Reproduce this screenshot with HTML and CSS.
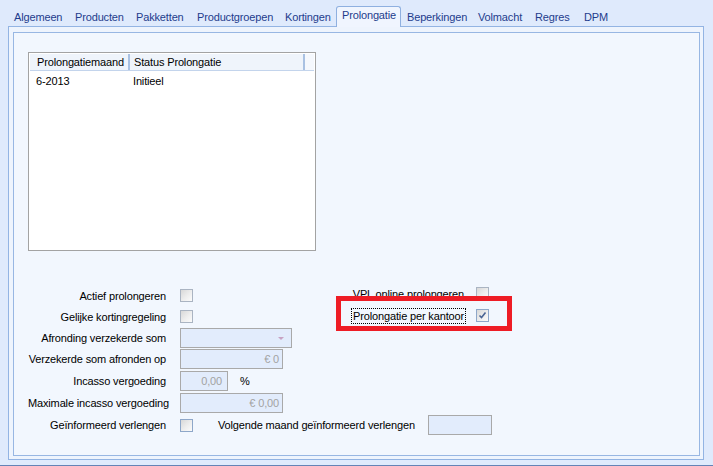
FILE: index.html
```html
<!DOCTYPE html>
<html>
<head>
<meta charset="utf-8">
<link rel="stylesheet" href="styles.css">
</head>
<body>
<div class="app">
  <div class="tabs">
    <div class="tab">Algemeen</div>
    <div class="tab">Producten</div>
    <div class="tab">Pakketten</div>
    <div class="tab">Productgroepen</div>
    <div class="tab">Kortingen</div>
    <div class="tab active">Prolongatie</div>
    <div class="tab">Beperkingen</div>
    <div class="tab">Volmacht</div>
    <div class="tab">Regres</div>
    <div class="tab">DPM</div>
  </div>
  <div class="sheet">
    <div class="panel">
      <div class="listbox">
        <div class="lv-head">
          <div class="lv-col c1">Prolongatiemaand</div>
          <div class="lv-col c2">Status Prolongatie</div>
          <div class="lv-fill"></div>
        </div>
        <div class="lv-row">
          <div class="lv-cell c1">6-2013</div>
          <div class="lv-cell c2">Initieel</div>
        </div>
      </div>

      <div class="form">
        <div class="lbl">Actief prolongeren</div>
        <div class="ctl"><span class="cb"></span></div>
        <div class="side lift2"><span class="side-lbl">VPL online prolongeren</span><span class="cb"></span></div>

        <div class="lbl">Gelijke kortingregeling</div>
        <div class="ctl"><span class="cb"></span></div>
        <div class="side lift1"><span class="side-lbl focus">Prolongatie per kantoor</span><span class="cb checked"><svg width="11" height="11" viewBox="0 0 11 11"><path d="M2.5 5.5 L4.5 7.5 L8.5 2.5" fill="none" stroke="#4a6494" stroke-width="1.6"/></svg></span></div>

        <div class="lbl">Afronding verzekerde som</div>
        <div class="ctl wide"><span class="combo"><span class="arrow"></span></span></div>

        <div class="lbl">Verzekerde som afronden op</div>
        <div class="ctl wide"><span class="edit w103">€ 0</span></div>

        <div class="lbl">Incasso vergoeding</div>
        <div class="ctl wide"><span class="edit w48">0,00</span><span class="pct">%</span></div>

        <div class="lbl">Maximale incasso vergoeding</div>
        <div class="ctl wide"><span class="edit w103">€ 0,00</span></div>

        <div class="lbl">Geïnformeerd verlengen</div>
        <div class="ctl wide"><span class="cb blue"></span><span class="next-lbl">Volgende maand geïnformeerd verlengen</span><span class="edit w64"></span></div>
      </div>
    </div>
  </div>
  <div class="annot"></div>
</div>
</body>
</html>
```

FILE: styles.css
```css
* { box-sizing: border-box; }
html, body { margin: 0; padding: 0; }
body {
  background: #dfeafc;
  font-family: "Liberation Sans", Arial, sans-serif;
  font-size: 11px;
  letter-spacing: -0.15px;
  color: #000;
}
.app {
  position: relative;
  width: 713px;
  height: 466px;
  border-bottom: 1px solid #6483b6;
  overflow: hidden;
}
.tabs {
  display: grid;
  grid-template-columns: 61px 61px 61px 88px 57px 65px 71px 57px 49px 40px;
  height: 26px;
  padding-left: 8px;
  align-items: end;
}
.tab {
  height: 16px;
  padding: 1px 0 0 6px;
  line-height: 13px;
  color: #1e3c8c;
  white-space: nowrap;
}
.tab.active {
  position: relative;
  z-index: 1;
  height: 21px;
  margin-bottom: -1px;
  padding: 2px 0 0 5px;
  border: 1px solid #8fb0e0;
  border-bottom: none;
  border-radius: 3px 3px 0 0;
  background: #f0f5fe;
}
.sheet {
  width: 696px;
  height: 434px;
  margin-left: 8px;
  border: 1px solid #93b4e3;
  background: #eef4fd;
  padding: 5px 0 0 4px;
}
.panel {
  width: 687px;
  height: 424px;
  border: 1px solid #98b7e3;
  background: #f2f7fe;
  padding: 19px 0 0 14px;
}
.listbox {
  width: 288px;
  height: 199px;
  border: 1px solid #a3a3a3;
  background: #fff;
  padding: 1px;
}
.lv-head {
  display: flex;
  height: 17px;
  background: #eff4fb;
  border-bottom: 1px solid #c3d4ec;
  line-height: 16px;
}
.lv-col { border-right: 2px solid #a9c1e2; white-space: nowrap; }
.lv-head .c1 { width: 100px; padding-left: 7px; }
.lv-head .c2 { width: 175px; padding-left: 4px; }
.lv-fill { flex: 1; background: #f5f8fd; }
.lv-row { display: flex; padding-top: 2px; line-height: 16px; }
.lv-row .c1 { width: 100px; padding-left: 6px; }
.lv-row .c2 { padding-left: 3px; }

.form {
  display: grid;
  grid-template-columns: 138px 112px 183px;
  grid-template-rows: 21px 21px 21px 22px 22px 22px 22px;
  column-gap: 14px;
  align-items: center;
  margin-top: 34px;
}
.lbl { grid-column: 1; text-align: right; white-space: nowrap; }
.ctl { grid-column: 2; display: flex; align-items: center; }
.ctl.wide { grid-column: 2 / 4; }
.side {
  grid-column: 3;
  display: flex;
  justify-content: flex-end;
  align-items: center;
  gap: 10px;
  white-space: nowrap;
}
.lift2 { margin-bottom: 4px; }
.lift1 { margin-bottom: 2px; }
.side-lbl {
  padding: 0 1px;
  border: 1px solid transparent;
  line-height: 14px;
}
.side-lbl.focus { border: 1px dotted #000; }

.cb {
  display: inline-block;
  width: 13px;
  height: 13px;
  border: 1px solid #aab4c2;
  background: linear-gradient(135deg, #d8d8d8 0%, #eeeeee 55%, #fbfbfb 100%);
  flex: none;
}
.cb.blue { border-color: #8ea7c9; }
.cb.checked { border-color: #8ea7c9; padding: 0; }
.cb svg { display: block; }

.edit, .combo {
  display: inline-block;
  height: 20px;
  border: 1px solid #a9a9a9;
  background: #e2ecfc;
  color: #a3a3a3;
  text-align: right;
  line-height: 18px;
  padding-right: 3px;
  flex: none;
}
.w103 { width: 103px; }
.w48 { width: 48px; padding-right: 5px; }
.w64 { width: 64px; }
.combo { width: 112px; position: relative; }
.arrow {
  position: absolute;
  right: 7px;
  top: 8px;
  width: 0;
  height: 0;
  border-left: 3px solid transparent;
  border-right: 3px solid transparent;
  border-top: 3px solid #c7a3c3;
}
.pct { margin-left: 12px; }
.next-lbl { margin-left: 25px; width: 210px; flex: none; white-space: nowrap; }

.annot {
  position: absolute;
  left: 336px;
  top: 296px;
  width: 176px;
  height: 35px;
  border: 5px solid #ee1c25;
}
```
